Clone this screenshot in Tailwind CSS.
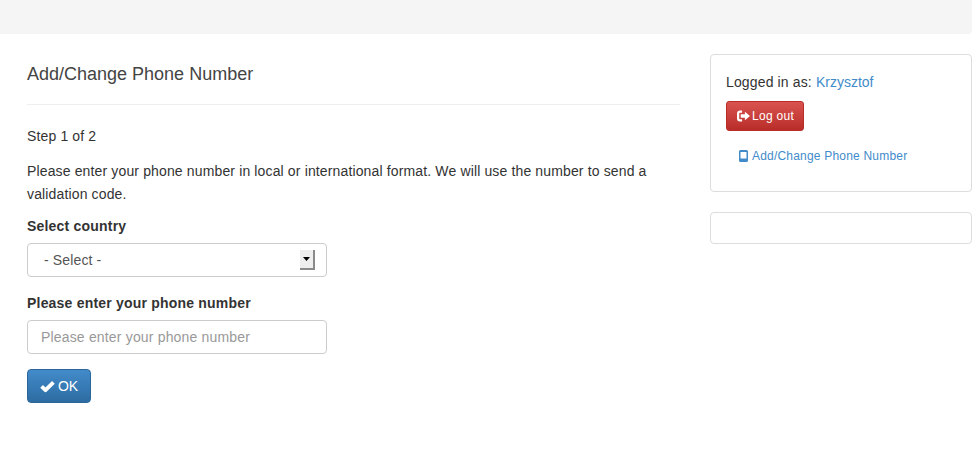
<!DOCTYPE html>
<html lang="en">
<head>
<meta charset="utf-8">
<title>Add/Change Phone Number</title>
<script src="https://cdn.jsdelivr.net/npm/@tailwindcss/browser@4"></script>
</head>
<body class="bg-white text-[#333] font-['Liberation_Sans',Arial,sans-serif] text-[14px] leading-[20px] tracking-[0.14px]">

<div class="h-[34px] mr-[5px] bg-[#f5f5f5] rounded-br-[4px]"></div>

<main class="flex pl-[27px] pr-[5px]">

  <section class="w-[653px]">
    <h1 class="mt-[29px] pb-[19px] border-b border-[#eee] text-[18px] leading-[22px] tracking-[0] font-normal text-[#444]">Add/Change Phone Number</h1>
    <p class="mt-[21px]">Step 1 of 2</p>
    <p class="mt-[14px] leading-[23px]">Please enter your phone number in local or international format. We will use the number to send a validation code.</p>

    <form class="mt-[10px]">
      <label class="block font-bold leading-[20px] tracking-[0.2px]">Select country</label>
      <div class="mt-[7px] w-[300px] h-[34px] border border-[#ccc] rounded-[4px] flex items-center justify-between pl-[16px] pr-[11px] text-[#555]">
        <span>- Select -</span>
        <span class="w-[15px] h-[20px] bg-[#eee] border-r-2 border-b-2 border-[#8a8a8a] flex items-center justify-center">
          <svg width="7" height="4" viewBox="0 0 7 4"><path d="M0 0h7L3.500 4z" fill="#000"/></svg>
        </span>
      </div>

      <label class="block mt-[16px] font-bold leading-[20px] tracking-[0.2px]">Please enter your phone number</label>
      <input type="text" placeholder="Please enter your phone number" class="block mt-[7px] w-[300px] h-[34px] border border-[#ccc] rounded-[4px] px-[13px] tracking-[0.17px] placeholder:text-[#999] outline-none">

      <button type="button" class="mt-[15px] w-[64px] h-[34px] flex items-center justify-center gap-[3px] rounded-[4px] border border-[#2b669a] bg-gradient-to-b from-[#428bca] to-[#2d6ca2] text-white tracking-[0]">
        <svg width="15" height="13" viewBox="0 0 15 13"><path d="M1.600 6.300 L5.500 10.200 L13.400 2.300" fill="none" stroke="#fff" stroke-width="3.800" stroke-linejoin="round"/></svg>
        OK
      </button>
    </form>
  </section>

  <aside class="ml-[30px] w-[262px] mt-[20px]">
    <div class="h-[138px] border border-[#ddd] rounded-[4px] pt-[17px] pl-[15px]">
      <p>Logged in as: <a href="#" class="text-[#428bca] tracking-[0]">Krzysztof</a></p>
      <button type="button" class="mt-[9px] w-[78px] h-[30px] flex items-center pl-[10px] gap-[2px] rounded-[3px] border border-[#b92c28] bg-gradient-to-b from-[#d9534f] to-[#b92c28] text-white text-[12px] tracking-[0.3px]">
        <svg width="13" height="12" viewBox="0 0 14 12"><path d="M5.500 1.200H3.200a2 2 0 0 0-2 2v5.600a2 2 0 0 0 2 2h2.300" fill="none" stroke="#fff" stroke-width="2.400"/><path d="M4 4.200h4.500V1.500L14 6l-5.500 4.500V7.800H4z" fill="#fff"/></svg>
        Log out
      </button>
      <a href="#" class="mt-[15px] ml-[13px] flex items-center gap-[4px] text-[12px] tracking-[0.2px] text-[#428bca]">
        <svg width="9" height="12" viewBox="0 0 9 12"><path fill-rule="evenodd" d="M1.500 0h6A1.500 1.500 0 0 1 9 1.500v9A1.500 1.500 0 0 1 7.500 12h-6A1.500 1.500 0 0 1 0 10.500v-9A1.500 1.500 0 0 1 1.500 0zM1.500 2v6.500h6V2z" fill="#428bca"/></svg>
        Add/Change Phone Number
      </a>
    </div>
    <div class="mt-[20px] h-[32px] border border-[#ddd] rounded-[4px]"></div>
  </aside>

</main>

</body>
</html>
